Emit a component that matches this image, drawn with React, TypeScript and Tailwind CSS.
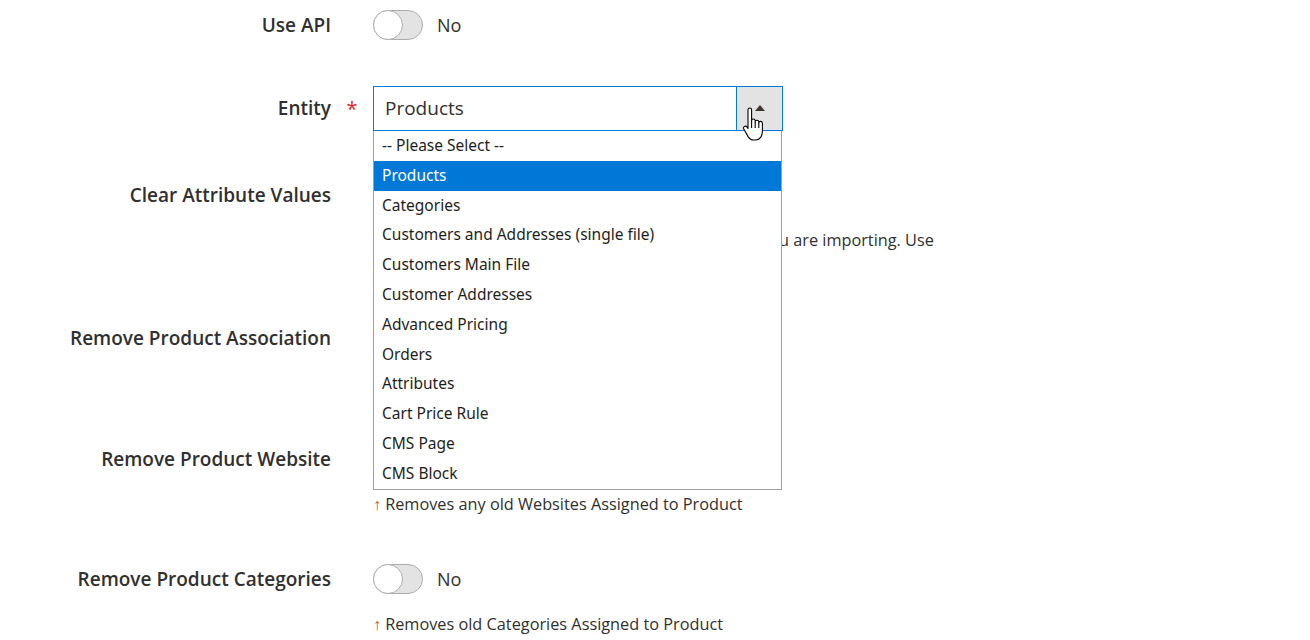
import React from "react";

const labelCls =
  "w-[331px] shrink-0 text-right text-[19px] font-semibold text-[#303030]";

function Toggle() {
  return (
    <div className="flex items-center h-[30px]">
      <div className="relative w-[50px] h-[30px] rounded-full bg-[#e3e3e3] border border-[#adadad]">
        <div className="absolute left-[-1px] top-[-1px] w-[30px] h-[30px] rounded-full bg-white border border-[#adadad]" />
      </div>
      <span className="ml-[14px] text-[18px] text-[#303030]">No</span>
    </div>
  );
}

function Note({ children }: { children: React.ReactNode }) {
  return (
    <div className="mt-[18px] text-[16.3px] leading-[24px] text-[#303030]">
      <span className="text-[#d4501c] mr-[4px]">↑</span>
      {children}
    </div>
  );
}

function Row({
  label,
  required,
  children,
  className,
  lh = "leading-[30px]",
}: {
  label: string;
  required?: boolean;
  children: React.ReactNode;
  className?: string;
  lh?: string;
}) {
  return (
    <div className={"flex items-start " + (className ?? "")}>
      <div className={labelCls + " " + lh}>{label}</div>
      <div className="w-[42px] shrink-0 flex justify-center">
        {required && (
          <span className={"text-[#e22626] text-[20px] " + lh}>*</span>
        )}
      </div>
      <div className="flex-1">{children}</div>
    </div>
  );
}

const options = [
  "-- Please Select --",
  "Products",
  "Categories",
  "Customers and Addresses (single file)",
  "Customers Main File",
  "Customer Addresses",
  "Advanced Pricing",
  "Orders",
  "Attributes",
  "Cart Price Rule",
  "CMS Page",
  "CMS Block",
];

function HandCursor() {
  return (
    <svg
      width="24"
      height="36"
      viewBox="0 0 20 30"
      className="absolute left-[5px] top-[21px] z-20"
    >
      <path
        d="M5 2.5c0-1 .7-1.6 1.5-1.6S8 1.5 8 2.5v9c0-1 .7-1.5 1.5-1.5s1.5.6 1.5 1.5v1c0-1 .7-1.5 1.5-1.5s1.5.6 1.5 1.5v1c0-1 .7-1.5 1.4-1.5.8 0 1.6.6 1.6 1.5v7c0 3.5-2 7-5.5 7H9.5c-2 0-3.2-1-4.3-2.6L1.6 18.5c-.6-.9-.4-1.9.4-2.3.8-.5 1.7-.2 2.3.6L5 18V2.5z"
        fill="#fff"
        stroke="#000"
        strokeWidth="0.9"
        strokeLinejoin="round"
      />
      <path d="M8 11.5v6M11 12.5v5M14 13.5v4" stroke="#000" strokeWidth="0.9" />
    </svg>
  );
}

export default function App() {
  return (
    <div
      className="w-[1310px] h-[640px] overflow-hidden bg-white pt-[10px]"
      style={{ fontFamily: '"Open Sans", "Noto Sans", sans-serif' }}
    >
      <Row label="Use API" className="mb-[46px]">
        <Toggle />
      </Row>

      <Row label="Entity" required className="mb-[49px] relative z-10" lh="leading-[45px]">
        <div className="relative w-[410px]">
          <div className="flex h-[45px] border border-[#007bdb] bg-white">
            <div className="flex-1 flex items-center pl-[11px] text-[19px] text-[#303030]">
              Products
            </div>
            <div className="relative w-[46px] bg-[#e3e3e3] border-l border-[#007bdb] flex items-center justify-center">
              <div className="w-0 h-0 border-l-[5px] border-r-[5px] border-b-[6px] border-l-transparent border-r-transparent border-b-[#41362f] mt-[-2px]" />
            </div>
          </div>
          <div className="absolute left-0 top-[45px] w-[409px] bg-white border border-t-0 border-[#a0a0a0]">
            {options.map((o) => (
              <div
                key={o}
                className={
                  "h-[29.8px] leading-[29.8px] pl-[8px] text-[15.5px] " +
                  (o === "Products" ? "bg-[#0078d7] text-white" : "text-[#1e1e1e]")
                }
                style={{ fontFamily: '"Noto Sans", sans-serif' }}
              >
                {o}
              </div>
            ))}
          </div>
          <div className="absolute left-[364px] top-0">
            <HandCursor />
          </div>
        </div>
      </Row>

      <Row label="Clear Attribute Values" className="mb-[47px]">
        <Toggle />
        <div className="w-[580px]">
          <Note>
            Removes all Attribute Values of the Products that you are importing. Use
            with care.
          </Note>
        </div>
      </Row>

      <Row label="Remove Product Association" className="mb-[49px]">
        <Toggle />
        <Note>Removes Associated Products if empty</Note>
      </Row>

      <Row label="Remove Product Website" className="mb-[48px]">
        <Toggle />
        <Note>Removes any old Websites Assigned to Product</Note>
      </Row>

      <Row label="Remove Product Categories">
        <Toggle />
        <Note>Removes old Categories Assigned to Product</Note>
      </Row>
    </div>
  );
}
